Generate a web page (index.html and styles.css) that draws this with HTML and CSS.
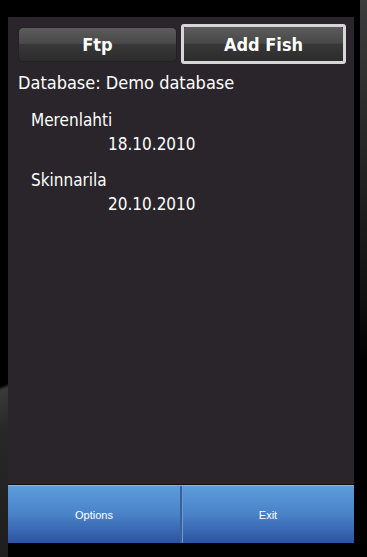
FILE: index.html
```html
<!DOCTYPE html>
<html>
<head>
<meta charset="utf-8">
<link rel="stylesheet" href="styles.css">
</head>
<body>
<div class="screen">
  <div class="panel">
    <div class="toolbar">
      <div class="btn ftp"><span>Ftp</span></div>
      <div class="btn-frame"><div class="btn add"><span>Add Fish</span></div></div>
    </div>
    <div class="db">Database: Demo database</div>
    <ul class="list">
      <li class="item"><div class="place">Merenlahti</div><div class="date">18.10.2010</div></li>
      <li class="item"><div class="place">Skinnarila</div><div class="date">20.10.2010</div></li>
    </ul>
  </div>
  <div class="softkeys">
    <div class="sk">Options</div>
    <div class="sk">Exit</div>
  </div>
</div>
</body>
</html>
```

FILE: styles.css
```css
html, body {
  margin: 0;
  padding: 0;
  width: 367px;
  height: 557px;
  overflow: hidden;
}
body {
  background:
    linear-gradient(to bottom, #3c3c3c 0px, #2a2a2a 120px, #111 300px, #000 360px) 360px 0 / 7px 557px no-repeat,
    linear-gradient(160deg, transparent 0px, transparent 20px, #3a3a3a 24px, #282828 60px, #1e1e1e 180px) 0 365px / 8px 192px no-repeat,
    #000;
  font-family: "DejaVu Sans Condensed", "DejaVu Sans", sans-serif;
  color: #fff;
}
.screen {
  margin-left: 8px;
  padding-top: 17px;
  width: 346px;
}
.panel {
  background: #29252a;
  height: 468px;
  padding: 7px 8px 0 10px;
  box-sizing: border-box;
  border-bottom: 1px solid #111;
}
.toolbar {
  display: flex;
  align-items: center;
  gap: 4px;
  height: 40px;
}
.btn {
  display: flex;
  align-items: center;
  justify-content: center;
  background: linear-gradient(to bottom, #5c5c5c 0%, #484848 48%, #383838 50%, #2c2c2c 100%);
  font-weight: bold;
  font-size: 18px;
  color: #fff;
  box-sizing: border-box;
}
.ftp {
  width: 159px;
  height: 35px;
  border-radius: 5px;
  border: 1px solid #222;
}
.btn-frame {
  width: 165px;
  height: 40px;
  border: 3px solid #d6d6d6;
  border-radius: 3px;
  box-sizing: border-box;
  background: #29252a;
}
.add {
  width: 100%;
  height: 100%;
  border-radius: 2px;
}
.db {
  margin-top: 7px;
  font-size: 18px;
  line-height: 24px;
}
.list {
  list-style: none;
  margin: 13px 0 0 0;
  padding: 0 0 0 13px;
}
.item {
  margin-bottom: 12px;
}
.place {
  font-size: 17px;
  line-height: 24px;
}
.date {
  font-size: 17px;
  line-height: 24px;
  padding-left: 77px;
}
.softkeys {
  display: flex;
  height: 58px;
  background: linear-gradient(to bottom, #5c9ddb 0%, #4a82c8 50%, #2c53a4 100%);
  border-top: 1px solid #7fb4e6;
  box-sizing: border-box;
}
.sk {
  flex: 1;
  display: flex;
  align-items: center;
  justify-content: center;
  font-family: "Liberation Sans", Arial, sans-serif;
  font-size: 11px;
  color: #fff;
}
.sk + .sk {
  border-left: 2px solid #3a6096;
  box-shadow: inset 1px 0 0 #6a9ad0;
}
```
